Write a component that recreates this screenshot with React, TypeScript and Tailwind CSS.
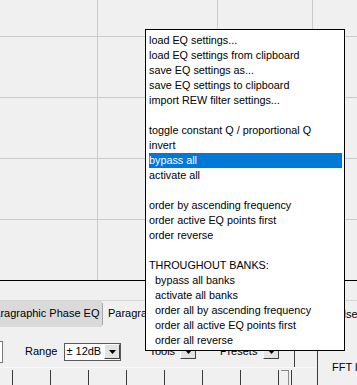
import React from "react";

// one entry per menu row; null is an empty spacer row
type MenuItem = {
  label: string;
  indent?: boolean;
  active?: boolean;
} | null;

const menuItems: MenuItem[] = [
  { label: "load EQ settings..." },
  { label: "load EQ settings from clipboard" },
  { label: "save EQ settings as..." },
  { label: "save EQ settings to clipboard" },
  { label: "import REW filter settings..." },
  null,
  { label: "toggle constant Q / proportional Q" },
  { label: "invert" },
  { label: "bypass all", active: true },
  { label: "activate all" },
  null,
  { label: "order by ascending frequency" },
  { label: "order active EQ points first" },
  { label: "order reverse" },
  null,
  { label: "THROUGHOUT BANKS:" },
  { label: "bypass all banks", indent: true },
  { label: "activate all banks", indent: true },
  { label: "order all by ascending frequency", indent: true },
  { label: "order all active EQ points first", indent: true },
  { label: "order all reverse", indent: true },
];

function Arrow() {
  return (
    <svg width="7" height="4" viewBox="0 0 7 4">
      <polygon points="0,0 7,0 3.5,4" fill="#000" />
    </svg>
  );
}

function DropButton() {
  return (
    <div className="flex h-[15px] w-[16px] items-center justify-center border border-t-white border-l-white border-r-[#404040] border-b-[#404040] bg-[#e3e3e3]">
      <Arrow />
    </div>
  );
}

function GraphGrid() {
  return (
    <svg width="357" height="280" className="block">
      {[97.5, 217.5, 312.5].map((x) => (
        <line key={x} x1={x} y1={0} x2={x} y2={280} stroke="#cacaca" />
      ))}
      {[36.5, 97.5, 158.5, 219.5].map((y) => (
        <line key={y} x1={0} y1={y} x2={357} y2={y} stroke="#cacaca" />
      ))}
    </svg>
  );
}

export default function App() {
  return (
    <div className="relative h-[385px] w-[357px] overflow-hidden bg-[#f0f0f0] font-['Liberation_Sans',Arial,sans-serif] text-[11px] leading-none text-black">
      {/* graph area */}
      <div className="h-[281px] border-b border-black">
        <GraphGrid />
      </div>

      <div className="h-[19px]" />

      {/* lower panel */}
      <div className="flex h-[85px] border-t border-[#d6d6d6]">
        <div className="flex w-[317px] shrink-0 flex-col overflow-hidden">
          {/* tabs */}
          <div className="flex h-[26px] items-center">
            <div className="flex h-full w-[102px] shrink-0 items-center overflow-hidden bg-[#dadada]">
              <span className="ml-[-13px] whitespace-nowrap">Paragraphic Phase EQ</span>
            </div>
            <div className="h-[22px] w-px shrink-0 bg-[#a8a8a8]" />
            <span className="ml-[5px] whitespace-nowrap">Paragraphic EQ</span>
          </div>

          {/* controls */}
          <div className="flex h-[41px] items-center pt-[10px]">
            <div className="ml-[-17px] h-[22px] w-[20px] shrink-0 border border-[#7a7a7a] bg-white" />
            <span className="ml-[22px]">Range</span>
            <div className="ml-[7px] flex h-[18px] w-[57px] shrink-0 items-center border border-[#5a5a5a] bg-white">
              <span className="ml-[1px] flex-1">± 12dB</span>
              <DropButton />
            </div>
            <span className="ml-[28px]">Tools</span>
            <div className="ml-[5px]">
              <DropButton />
            </div>
            <span className="ml-[24px]">Presets</span>
            <div className="ml-[6px]">
              <DropButton />
            </div>
            <div className="ml-[15px] h-full w-px shrink-0 self-end bg-[#404040]" />
          </div>

          {/* fader strip */}
          <div className="flex h-[18px] border-t border-[#fafafa] pt-[2px]">
            <div className="ml-[12px] h-full w-px bg-[#3a3a3a]" />
            <div className="ml-[37px] h-full w-px bg-[#3a3a3a]" />
            <div className="ml-[37px] h-full w-px bg-[#3a3a3a]" />
            <div className="ml-[37px] h-full w-px bg-[#3a3a3a]" />
            <div className="ml-[37px] h-full w-px bg-[#3a3a3a]" />
            <div className="ml-[37px] h-full w-px bg-[#3a3a3a]" />
            <div className="ml-[37px] h-full w-px bg-[#3a3a3a]" />
            <div className="ml-[37px] h-full w-px bg-[#3a3a3a]" />
            <div className="ml-[2px] h-full w-[8px] border-t border-r border-[#8a8a8a]" />
            <div className="ml-[2px] h-full w-px bg-[#3a3a3a]" />
          </div>
        </div>

        {/* right panel */}
        <div className="flex min-w-0 flex-1 flex-col overflow-hidden border-l border-[#3a3a3a]">
          <div className="flex h-[26px] items-center">
            <span className="ml-[1px] whitespace-nowrap">Impulse</span>
          </div>
          <div className="mt-[35px] ml-[14px] whitespace-nowrap">FFT length</div>
        </div>
      </div>

      {/* popup menu */}
      <div className="absolute left-[145px] top-[29px] w-[200px] border border-black bg-white pt-[3px] pb-[2px] text-[10.8px]">
        {menuItems.map((item, i) =>
          item === null ? (
            <div key={i} className="h-[15px]" />
          ) : (
            <div
              key={i}
              className={
                item.active
                  ? "ml-[3px] mr-[2px] h-[15px] whitespace-nowrap bg-[#0078d7] leading-[15px] text-white"
                  : "ml-[3px] mr-[2px] h-[15px] whitespace-nowrap leading-[15px]"
              }
            >
              <span className={item.indent ? "pl-[6px]" : ""}>{item.label}</span>
            </div>
          )
        )}
      </div>
    </div>
  );
}
